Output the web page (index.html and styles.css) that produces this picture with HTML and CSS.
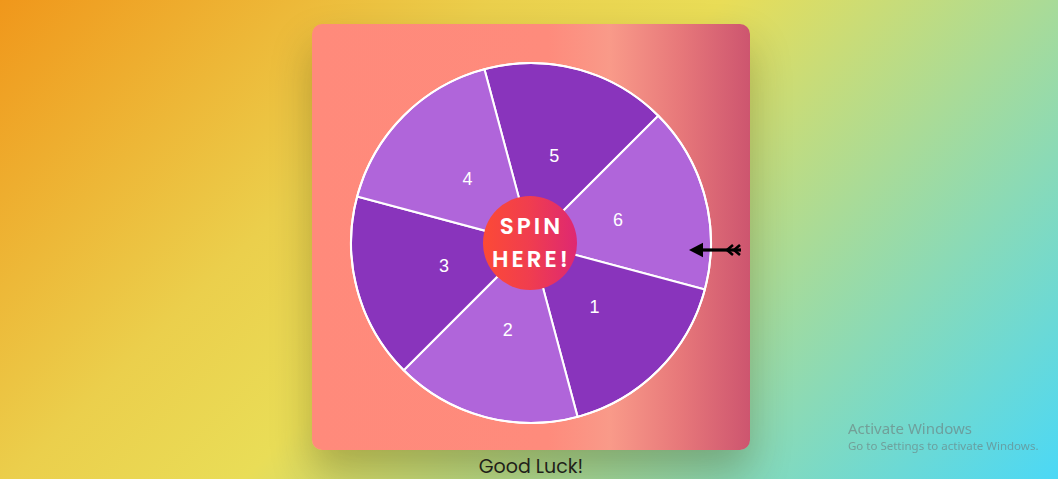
FILE: index.html
```html
<!DOCTYPE html>
<html lang="en">
<head>
<meta charset="utf-8">
<title>Spin Wheel</title>
<link rel="stylesheet" href="styles.css">
</head>
<body>
<main class="stage">
  <section class="card">
    <div class="wheel">
      <svg class="wheel-svg" viewBox="-182 -182 364 364" width="364" height="364">
        <circle cx="0" cy="0" r="180" fill="#b064da"/>
        <path class="seg dark" d="M0 0 L-46.59 -173.87 A180 180 0 0 1 127.28 -127.28 Z"/>
        <path class="seg light" d="M0 0 L127.28 -127.28 A180 180 0 0 1 173.87 46.59 Z"/>
        <path class="seg dark" d="M0 0 L173.87 46.59 A180 180 0 0 1 46.59 173.87 Z"/>
        <path class="seg light" d="M0 0 L46.59 173.87 A180 180 0 0 1 -127.28 127.28 Z"/>
        <path class="seg dark" d="M0 0 L-127.28 127.28 A180 180 0 0 1 -173.87 -46.59 Z"/>
        <path class="seg light" d="M0 0 L-173.87 -46.59 A180 180 0 0 1 -46.59 -173.87 Z"/>
        <circle cx="0" cy="0" r="180" fill="none" stroke="#fff" stroke-width="2"/>
        <text class="num" x="23.3" y="-86.9">5</text>
        <text class="num" x="86.9" y="-23.3">6</text>
        <text class="num" x="63.6" y="63.6">1</text>
        <text class="num" x="-23.3" y="86.9">2</text>
        <text class="num" x="-86.9" y="23.3">3</text>
        <text class="num" x="-63.6" y="-63.6">4</text>
      </svg>
      <button class="spin">SPIN<br>HERE!</button>
    </div>
    <svg class="pointer" viewBox="0 0 54 16" width="54" height="16">
      <polygon points="0,8 14,0.8 14,15.2" fill="#000"/>
      <rect x="13" y="6.4" width="39" height="3.2" fill="#000"/>
      <polyline points="44,3 38,8 44,13" fill="none" stroke="#000" stroke-width="2.6"/>
      <polyline points="51,3 45,8 51,13" fill="none" stroke="#000" stroke-width="2.6"/>
    </svg>
  </section>
  <p class="luck">Good Luck!</p>
</main>
<div class="activate">
  <div class="activate-title">Activate Windows</div>
  <div class="activate-sub">Go to Settings to activate Windows.</div>
</div>
</body>
</html>
```

FILE: styles.css
```css
html, body {
  margin: 0;
  padding: 0;
}

body {
  width: 100%;
  height: 100vh;
  overflow: hidden;
  background: linear-gradient(135deg, #f0971b 0%, #ebcf4c 32%, #e9dd57 47%, #4bd8f6 100%);
  font-family: "Poppins", "Inter", "Lato", sans-serif;
}

.stage {
  display: flex;
  flex-direction: column;
  align-items: center;
  padding-top: 24px;
  padding-left: 4px;
}

.card {
  position: relative;
  box-sizing: border-box;
  width: 438px;
  height: 426px;
  border-radius: 10px;
  background: linear-gradient(90deg, #ff8a7b 0%, #fe8b7c 54%, #f99a89 68%, #e7787a 84%, #cd556f 100%);
  box-shadow: 0 22px 40px rgba(40, 40, 0, 0.28);
  display: flex;
  justify-content: center;
  padding-top: 37px;
}

.wheel {
  position: relative;
  width: 364px;
  height: 364px;
}

.wheel-svg {
  display: block;
}

.seg {
  stroke: #fff;
  stroke-width: 2;
  stroke-linejoin: round;
}

.dark {
  fill: #8934bc;
}

.light {
  fill: #b065da;
}

.num {
  fill: #fff;
  font-family: "Liberation Sans", Arial, sans-serif;
  font-size: 18px;
  text-anchor: middle;
  dominant-baseline: central;
}

.spin {
  position: absolute;
  left: 50%;
  top: 50%;
  width: 94px;
  height: 94px;
  margin-left: -48px;
  margin-top: -47px;
  border: none;
  border-radius: 50%;
  padding: 0 0 0 3px;
  background: linear-gradient(90deg, #fc4a36 0%, #f03d4f 50%, #de2872 100%);
  color: #fff;
  font-family: "Poppins", "Inter", sans-serif;
  font-weight: 600;
  font-size: 23px;
  line-height: 33px;
  letter-spacing: 3px;
  text-align: center;
  cursor: pointer;
}

.pointer {
  position: absolute;
  left: 377px;
  top: 218px;
}

.luck {
  margin: 4px 0 0;
  font-family: "Poppins", "Inter", sans-serif;
  font-size: 19px;
  line-height: 25px;
  color: #1f1f1f;
}

.activate {
  position: fixed;
  left: 848px;
  top: 418px;
  font-family: "Noto Sans", "Open Sans", sans-serif;
  color: rgba(110, 120, 120, 0.6);
}

.activate-title {
  font-size: 15px;
  line-height: 20px;
}

.activate-sub {
  font-size: 11.5px;
  line-height: 16px;
}
```
